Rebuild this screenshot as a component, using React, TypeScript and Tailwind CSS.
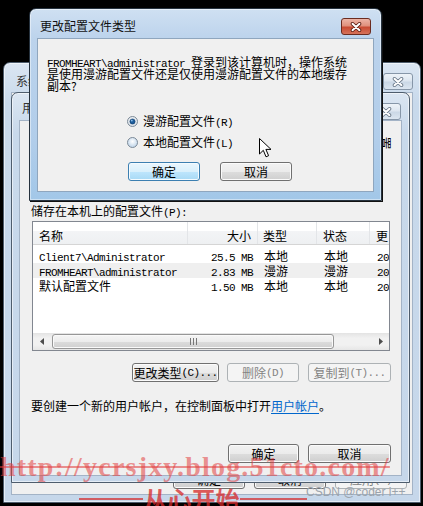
import React from "react";

// 等宽的西文部分 (宋体里每个西文字符 6px)
function M({ children }: { children: React.ReactNode }) {
  return (
    <span className="font-['Liberation_Mono',monospace] text-[11px] leading-[0px] tracking-[-0.6px] whitespace-pre">
      {children}
    </span>
  );
}

function CloseButton({ active }: { active?: boolean }) {
  return (
    <div
      className={
        active
          ? "w-[30px] h-[17px] shrink-0 rounded-[3px] border border-[#6b2c20] flex items-center justify-center bg-[linear-gradient(#ecb4a6_0%,#e0917d_45%,#c84b33_55%,#d6735a_100%)]"
          : "w-[30px] h-[17px] shrink-0 rounded-[3px] border border-[#8696a8] flex items-center justify-center bg-[linear-gradient(#eef3f8_0%,#dde6f0_45%,#cbd8e6_55%,#dce6f0_100%)]"
      }
    >
      <svg width="12" height="10" viewBox="0 0 12 10">
        <path d="M2.5 1.8 L9.5 8.2 M9.5 1.8 L2.5 8.2" stroke={active ? "#5a1d12" : "#6a7888"} strokeWidth="3.6" strokeLinecap="round" />
        <path d="M2.5 1.8 L9.5 8.2 M9.5 1.8 L2.5 8.2" stroke="#ffffff" strokeWidth="2" strokeLinecap="round" />
      </svg>
    </div>
  );
}

function Radio({ checked }: { checked?: boolean }) {
  const id = checked ? "radio-on" : "radio-off";
  return (
    <svg width="11" height="11" viewBox="0 0 11 11" className="shrink-0">
      <defs>
        <radialGradient id={id} cx="50%" cy="40%" r="60%">
          <stop offset="0" stopColor="#ffffff" />
          <stop offset="1" stopColor={checked ? "#d5dde6" : "#bcd2e8"} />
        </radialGradient>
      </defs>
      <circle cx="5.5" cy="5.5" r="5" fill={`url(#${id})`} stroke="#7d8a97" />
      {checked && <circle cx="5.5" cy="5.5" r="2.6" fill="#1c5d9c" stroke="#0c3561" strokeWidth="0.6" />}
      {checked && <circle cx="4.8" cy="4.6" r="0.9" fill="#8cc0ee" />}
    </svg>
  );
}

type Kind = "normal" | "default" | "disabled";

function Btn({ w, kind = "normal", children }: { w: string; kind?: Kind; children: React.ReactNode }) {
  const look =
    kind === "default"
      ? "border-[#3c7fb1] bg-[linear-gradient(#eaf6fd_0%,#d9f0fc_50%,#bee6fd_51%,#a7d9f5_100%)] shadow-[inset_0_0_0_1px_#f4fbff] text-black"
      : kind === "disabled"
      ? "border-[#adb2b5] bg-[#f4f4f4] text-[#838383]"
      : "border-[#707070] bg-[linear-gradient(#f2f2f2_0%,#ebebeb_50%,#dddddd_51%,#cfcfcf_100%)] shadow-[inset_0_0_0_1px_#fbfbfb] text-black";
  return (
    <div className={`${w} h-[19px] shrink-0 rounded-[3px] border flex items-center justify-center whitespace-nowrap overflow-hidden ${look}`}>
      {children}
    </div>
  );
}

const rows = [
  { name: "Client7\\Administrator", mono: true, size: "25.5 MB", type: "本地", status: "本地" },
  { name: "FROMHEART\\administrator", mono: true, size: "2.83 MB", type: "漫游", status: "漫游" },
  { name: "默认配置文件", mono: false, size: "1.50 MB", type: "本地", status: "本地" },
];

function ProfileList() {
  return (
    <div className="mt-[4px] mx-[1px] h-[130px] border border-[#828790] bg-white flex flex-col overflow-hidden">
      {/* 列标题 */}
      <div className="h-[23px] shrink-0 flex border-b border-[#d5d5d5] bg-[linear-gradient(#ffffff_0%,#ffffff_40%,#f3f4f6_41%,#eef0f2_100%)]">
        <div className="w-[155px] shrink-0 border-r border-[#e3e5e8] flex items-end pb-[2px] pl-[6px]">名称</div>
        <div className="w-[70px] shrink-0 border-r border-[#e3e5e8] flex items-end justify-end pb-[2px] pr-[6px]">大小</div>
        <div className="w-[59px] shrink-0 border-r border-[#e3e5e8] flex items-end pb-[2px] pl-[5px]">类型</div>
        <div className="w-[53px] shrink-0 border-r border-[#e3e5e8] flex items-end pb-[2px] pl-[6px]">状态</div>
        <div className="flex-1 flex items-end pb-[2px] pl-[6px]">更</div>
      </div>
      <div className="pt-[3px] flex flex-col">
        {rows.map((r, i) => (
          <div key={r.name} className={`h-[15px] flex items-center ${i === 1 ? "bg-[#efefef]" : ""}`}>
            <div className="w-[155px] shrink-0 pl-[6px]">{r.mono ? <M>{r.name}</M> : r.name}</div>
            <div className="w-[70px] shrink-0 text-right pr-[5px]"><M>{r.size}</M></div>
            <div className="w-[59px] shrink-0 pl-[6px]">{r.type}</div>
            <div className="w-[53px] shrink-0 pl-[7px]">{r.status}</div>
            <div className="flex-1 pl-[7px]"><M>20</M></div>
          </div>
        ))}
      </div>
      {/* 水平滚动条 */}
      <div className="mt-auto h-[17px] shrink-0 flex items-center bg-[linear-gradient(#e3e3e3,#f1f1f1_30%,#f1f1f1_70%,#e6e6e6)]">
        <div className="w-[17px] h-[17px] flex items-center justify-center">
          <svg width="4" height="7" viewBox="0 0 4 7"><path d="M4 0 L0 3.5 L4 7 Z" fill="#4d4d4d" /></svg>
        </div>
        <div className="ml-[2px] w-[282px] h-[15px] rounded-[3px] border border-[#979797] bg-[linear-gradient(#f5f5f5_0%,#ececec_50%,#dcdcdc_51%,#d0d0d0_100%)] shadow-[inset_0_0_0_1px_#fafafa] flex items-center justify-center gap-[2px]">
          <div className="w-[1px] h-[7px] bg-[#777]" />
          <div className="w-[1px] h-[7px] bg-[#777]" />
          <div className="w-[1px] h-[7px] bg-[#777]" />
        </div>
        <div className="flex-1" />
        <div className="w-[17px] h-[17px] flex items-center justify-center">
          <svg width="4" height="7" viewBox="0 0 4 7"><path d="M0 0 L4 3.5 L0 7 Z" fill="#4d4d4d" /></svg>
        </div>
      </div>
    </div>
  );
}

export default function App() {
  return (
    <div className="relative w-[423px] h-[506px] overflow-hidden bg-black font-['Noto_Sans_CJK_SC',sans-serif] text-[12px] leading-[12px] text-black">
      {/* 系统属性 (最底层窗口) */}
      <div className="absolute left-[3px] top-[62px] w-[418px] h-[441px] flex flex-col rounded-t-[7px] border border-[#4e5d6d] bg-[linear-gradient(#dbe6f2,#c8d9eb_40px,#c6d7ea)] shadow-[inset_0_0_0_1px_rgba(255,255,255,0.55)]">
        <div className="h-[29px] shrink-0 flex items-start justify-between pt-[10px] pl-[12px] pr-[7px]">
          <span className="mt-[2px] text-[#333]">系统属性</span>
          <CloseButton />
        </div>
        <div className="flex-1 mx-[7px] mb-[7px] border border-[#a3b3c6] bg-[#f0f0f0] flex flex-col justify-end items-end pb-[5px] pr-[5px]">
          <div className="flex gap-[9px]">
            <Btn w="w-[72px]">确定</Btn>
            <Btn w="w-[72px]">取消</Btn>
            <Btn w="w-[72px]" kind="disabled">应用<M>(A)</M></Btn>
          </div>
        </div>
      </div>

      {/* 用户配置文件 */}
      <div className="absolute left-[11px] top-[92px] w-[399px] h-[391px] flex flex-col rounded-t-[7px] border border-[#4e5d6d] bg-[linear-gradient(#dbe6f2,#c8d9eb_40px,#c6d7ea)] shadow-[inset_0_0_0_1px_rgba(255,255,255,0.55)]">
        <div className="h-[27px] shrink-0 flex items-start justify-between pt-[9px] pl-[10px] pr-[8px]">
          <span className="text-[#333]">用户配置文件</span>
          <div className="mt-[1px]">
            <CloseButton />
          </div>
        </div>
        <div className="relative flex-1 mx-[7px] mb-[6px] border border-[#a3b3c6] bg-[#f0f0f0] pt-[84px] pl-[11px] pr-[10px] flex flex-col">
          <span className="absolute left-[358px] top-[16px] rotate-90 text-[13px]">置</span>
          <div>
            储存在本机上的配置文件<M>(P):</M>
          </div>
          <ProfileList />
          <div className="mt-[12px] flex justify-end">
            <Btn w="w-[87px]" kind="normal">
              更改类型<M>(C)...</M>
            </Btn>
            <div className="ml-[8px]">
              <Btn w="w-[72px]" kind="disabled">
                删除<M>(D)</M>
              </Btn>
            </div>
            <div className="ml-[9px]">
              <Btn w="w-[83px]" kind="disabled">
                复制到<M>(T)...</M>
              </Btn>
            </div>
          </div>
          <div className="mt-[18px]">
            要创建一个新的用户帐户，在控制面板中打开
            <span className="text-[#0066cc] underline underline-offset-2">用户帐户</span>。
          </div>
          <div className="mt-[32px] flex justify-end gap-[9px]">
            <Btn w="w-[71px]">确定</Btn>
            <Btn w="w-[83px]">取消</Btn>
          </div>
        </div>
      </div>

      {/* 更改配置文件类型 (当前对话框) */}
      <div className="absolute left-[29px] top-[8px] w-[353px] h-[193px] flex flex-col rounded-t-[7px] border border-[#26323e] bg-[linear-gradient(#cfe0f2,#bcd3ec_30px,#b1cdea_70%,#a2c7e8)] shadow-[1px_1px_0_#111,inset_0_0_0_1px_rgba(255,255,255,0.45)]">
        <div className="h-[29px] shrink-0 flex items-start justify-between pt-[9px] pl-[10px] pr-[10px]">
          <span className="mt-[2px] text-[#111]">更改配置文件类型</span>
          <CloseButton active />
        </div>
        <div className="relative flex-1 mx-[7px] mb-[8px] border border-[#8fa6be] bg-[#f0f0f0] pt-[17px] pl-[9px] flex flex-col">
          <div>
            <M>{"FROMHEART\\administrator "}</M>登录到该计算机时，操作系统
          </div>
          <div>是使用漫游配置文件还是仅使用漫游配置文件的本地缓存</div>
          <div>副本?</div>
          <div className="mt-[23px] ml-[80px] flex items-center gap-[5px]">
            <Radio checked />
            <span>
              漫游配置文件<M>(R)</M>
            </span>
          </div>
          <div className="mt-[9px] ml-[80px] flex items-center gap-[5px]">
            <Radio />
            <span>
              本地配置文件<M>(L)</M>
            </span>
          </div>
          <div className="mt-[14px] ml-[81px] flex gap-[20px]">
            <Btn w="w-[72px]" kind="default">确定</Btn>
            <Btn w="w-[72px]">取消</Btn>
          </div>
          {/* 鼠标指针 */}
          <svg className="absolute left-[221px] top-[99px]" width="13" height="20" viewBox="0 0 13 20">
            <path d="M0.5 0.5 L0.5 16 L4.3 12.3 L7 18.8 L9.6 17.7 L6.9 11.4 L12 11.4 Z" fill="#ffffff" stroke="#000000" strokeWidth="1" strokeLinejoin="miter" />
          </svg>
        </div>
      </div>

      {/* 水印 */}
      <div className="absolute left-[0px] top-[453px] font-['Liberation_Serif',serif] font-bold text-[28px] leading-[28px] tracking-[1.2px] text-[rgba(226,60,60,0.55)] line-through whitespace-nowrap">
        http://ycrsjxy.blog.51cto.com/
      </div>
      <div className="absolute left-[79px] top-[487px] h-[24px] flex items-center text-[rgba(214,40,40,0.75)]">
        <div className="w-[64px] h-[2px] bg-[rgba(214,40,40,0.7)]" />
        <span className="w-[97px] text-center font-bold text-[24px] leading-[24px]">从心开始</span>
        <div className="w-[67px] h-[2px] bg-[rgba(214,40,40,0.7)]" />
      </div>
      <div className="absolute left-[306px] top-[486px] font-['Liberation_Sans',sans-serif] text-[12px] leading-[12px] text-[#9ba3ac] whitespace-nowrap">
        CSDN @coder i++
      </div>
    </div>
  );
}
